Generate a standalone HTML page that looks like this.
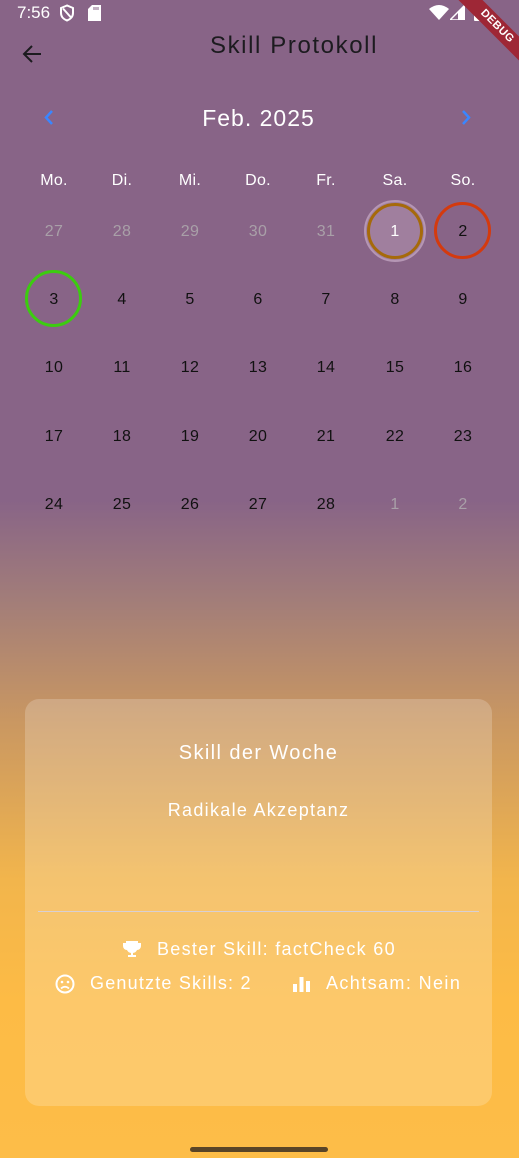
<!DOCTYPE html>
<html><head><meta charset="utf-8"><style>
*{margin:0;padding:0;box-sizing:border-box}
body{width:519px;height:1158px;overflow:hidden;position:relative;font-family:"Liberation Sans",sans-serif;
background:linear-gradient(180deg,#886487 0px,#886487 500px,#a27d79 600px,#c99762 720px,#f2b54c 880px,#fdbb45 1000px,#fdbd48 1158px)}
.a{position:absolute}
.c{position:absolute;width:60px;margin-left:-30px;text-align:center;font-size:16px;line-height:20px;color:#111;letter-spacing:0.3px}
.h{color:#fff;font-size:16px}
.g{color:#a9a0a8}
.ring{position:absolute;border-radius:50%}
</style></head><body>
<div class="a" style="left:17px;top:3px;color:#fff;font-size:17px">7:56</div>
<svg class="a" style="left:59px;top:4px" width="16" height="18" viewBox="0 0 16 18"><path d="M8 1.5L2 4v5c0 4 3 6.5 6 7.5 3-1 6-3.5 6-7.5V4z" fill="none" stroke="#fff" stroke-width="2"/><path d="M4 4.5l8 9" stroke="#fff" stroke-width="2"/></svg>
<svg class="a" style="left:88px;top:5px" width="13" height="16" viewBox="0 0 13 16"><path d="M4 0h9v16H0V4z" fill="#fff"/><path d="M6 2v3M8 2v3M10 2v3" stroke="#886487" stroke-width="1"/></svg>
<svg class="a" style="left:429px;top:5px" width="20" height="15" viewBox="0 0 20 15"><path d="M0 4Q10-4 20 4L10 15z" fill="#fff"/></svg>
<svg class="a" style="left:450px;top:5px" width="15" height="15" viewBox="0 0 15 15"><path d="M15 0V15H0z" fill="none" stroke="#fff" stroke-width="1.5"/><path d="M15 0V15H8V7z" fill="#fff"/></svg>
<svg class="a" style="left:474px;top:3px" width="10" height="18" viewBox="0 0 10 18"><rect x="0" y="2" width="10" height="16" rx="1" fill="#fff"/><rect x="3" y="0" width="4" height="3" fill="#fff"/></svg>
<div class="a" style="left:437px;top:18px;width:120px;height:17px;background:#9e2736;transform:rotate(45deg);color:#fff;font-weight:bold;font-size:11px;line-height:17px;text-align:center;letter-spacing:0.5px">DEBUG</div>
<svg class="a" style="left:21px;top:43px" width="22" height="22" viewBox="0 0 22 22"><path d="M20 11H3M11 3l-8 8 8 8" fill="none" stroke="#1c1b1f" stroke-width="2"/></svg>
<div class="a" style="left:0;width:588px;top:31px;text-align:center;font-size:24px;color:#1c1b1f;line-height:30px;letter-spacing:1.6px">Skill Protokoll</div>
<svg class="a" style="left:44px;top:110px" width="10" height="15" viewBox="0 0 10 15"><path d="M8 1L2 7.5 8 14" fill="none" stroke="#3a86ff" stroke-width="2.5"/></svg>
<svg class="a" style="left:461px;top:110px" width="10" height="15" viewBox="0 0 10 15"><path d="M2 1l6 6.5L2 14" fill="none" stroke="#3a86ff" stroke-width="2.5"/></svg>
<div class="a" style="left:0;width:517px;top:104px;text-align:center;font-size:23px;color:#fff;line-height:28px;letter-spacing:1px">Feb. 2025</div>
<div class="ring" style="left:364px;top:200px;width:62px;height:62px;background:#a07f9e;border:2px solid #b596b4"></div>
<div class="ring" style="left:367px;top:203px;width:56px;height:56px;border:3.5px solid #a66a0a"></div>
<div class="ring" style="left:434px;top:202px;width:57px;height:57px;border:3px solid #d43a0e"></div>
<div class="ring" style="left:25px;top:270px;width:57px;height:57px;border:3px solid #3ccc10"></div>
<div id="cal"></div>
<script>
var xs=[54,122,190,258,326,395,463],h=["Mo.","Di.","Mi.","Do.","Fr.","Sa.","So."],s="";
for(var i=0;i<7;i++)s+='<div class="c h" style="left:'+xs[i]+'px;top:171px">'+h[i]+'</div>';
var d=[27,28,29,30,31,1,2];for(var i=3;i<=28;i++)d.push(i);d.push(1,2);
var ys=[232,300,368,437,505];
for(var k=0;k<d.length;k++){var r=Math.floor(k/7),c=k%7;var cl=(k<5||k>=33)?"c g":"c";var st="";if(k==5)st="color:#fff;";
s+='<div class="'+cl+'" style="'+st+'left:'+xs[c]+'px;top:'+(ys[r]-10)+'px">'+d[k]+'</div>';}
document.getElementById("cal").innerHTML=s;
</script>
<div class="a" style="left:25px;top:699px;width:467px;height:407px;border-radius:14px;background:rgba(255,255,255,0.2)"></div>
<div class="a" style="left:25px;width:467px;top:740px;text-align:center;color:#fff;font-size:20px;line-height:26px;letter-spacing:1.4px">Skill der Woche</div>
<div class="a" style="left:25px;width:467px;top:799px;text-align:center;color:#fff;font-size:18px;line-height:22px;letter-spacing:1.3px">Radikale Akzeptanz</div>
<div class="a" style="left:38px;top:911px;width:441px;height:1px;background:#d8cfd4"></div>
<svg class="a" style="left:123px;top:940px" width="18" height="18" viewBox="0 0 18 18"><path d="M3 1h12v2h3v3a4 4 0 0 1-4 4 5 5 0 0 1-4 3v2h3v2H5v-2h3v-2a5 5 0 0 1-4-3 4 4 0 0 1-4-4V3h3z" fill="#fff"/></svg>
<div class="a" style="left:157px;top:938px;color:#fff;font-size:18px;line-height:22px;letter-spacing:1.3px">Bester Skill: factCheck 60</div>
<svg class="a" style="left:55px;top:974px" width="20" height="20" viewBox="0 0 20 20"><circle cx="10" cy="10" r="8.5" fill="none" stroke="#fff" stroke-width="2"/><circle cx="7" cy="8" r="1.3" fill="#fff"/><circle cx="13" cy="8" r="1.3" fill="#fff"/><path d="M6 14.5q4-3.5 8 0" fill="none" stroke="#fff" stroke-width="1.8"/></svg>
<div class="a" style="left:90px;top:972px;color:#fff;font-size:18px;line-height:22px;letter-spacing:1.2px">Genutzte Skills: 2</div>
<svg class="a" style="left:293px;top:975px" width="17" height="17" viewBox="0 0 17 17"><rect x="0" y="9" width="4" height="8" fill="#fff"/><rect x="6.5" y="2" width="4" height="15" fill="#fff"/><rect x="13" y="6" width="4" height="11" fill="#fff"/></svg>
<div class="a" style="left:326px;top:972px;color:#fff;font-size:18px;line-height:22px;letter-spacing:1.4px">Achtsam: Nein</div>
<div class="a" style="left:190px;top:1147px;width:138px;height:5px;border-radius:3px;background:#5a4527"></div>
</body></html>
